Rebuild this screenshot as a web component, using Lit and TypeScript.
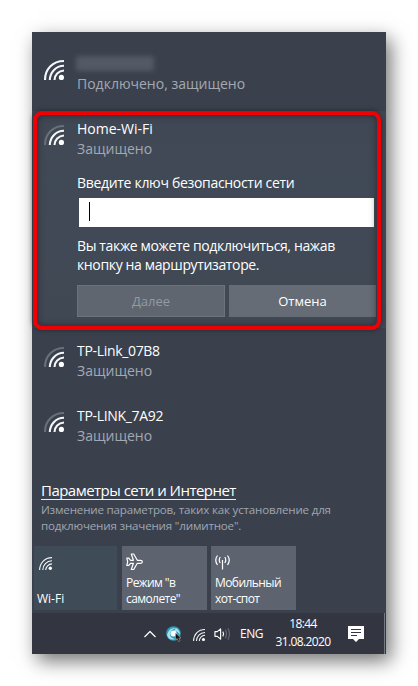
import { LitElement, html, css, svg } from "lit";
import { customElement, property } from "lit/decorators.js";

@customElement("wifi-icon")
class WifiIcon extends LitElement {
  @property({ type: Boolean }) weak = false;
  @property({ type: Boolean }) thin = false;
  static styles = css`
    :host { display: block; width: 20px; height: 20px; }
    svg { display: block; width: 100%; height: 100%; overflow: visible; }
    path { fill: none; stroke: #f4f6f9; stroke-width: 2.1; }
    .dim { stroke: #697079; }
    .thin { stroke-width: 1.7; }
    circle { fill: #fff; }
  `;
  render() {
    const t = this.thin ? "thin" : "";
    return html`<svg viewBox="0 0 20 20">
      ${svg`
      <path class="${t} ${this.weak ? "dim" : ""}" d="M1 20C1 9.5 8.500 1 20 1"/>
      <path class=${t} d="M5.800 20C6 12.500 11.500 6 20 5.800"/>
      <path class=${t} d="M10.500 20C10.500 15 14.500 10.800 20 10.500"/>
      <circle cx="17.400" cy="17.400" r="2.600"/>`}
    </svg>`;
  }
}

@customElement("network-row")
class NetworkRow extends LitElement {
  @property({ type: Boolean }) weak = false;
  @property({ type: Boolean }) masked = false;
  static styles = css`
    :host { display: flex; align-items: flex-start; height: 41px; }
    wifi-icon { margin: 6px 13px 0 12px; flex: none; }
    .text { display: flex; flex-direction: column; white-space: nowrap; }
    .name { height: 20px; line-height: 20px; color: #fff; }
    .status { height: 20px; line-height: 20px; color: #a3a9b3; }
    .mask { width: 78px; height: 15px; margin: 2px 0 3px -1px; background: #535a66; border-radius: 3px; filter: blur(2.5px); }
  `;
  render() {
    return html`<wifi-icon ?weak=${this.weak}></wifi-icon>
      <div class="text">
        ${this.masked ? html`<div class="mask"></div>` : html`<div class="name"><slot name="name"></slot></div>`}
        <div class="status"><slot name="status"></slot></div>
      </div>`;
  }
}

@customElement("app-root")
class AppRoot extends LitElement {
  static styles = css`
    :host {
      display: block; box-sizing: border-box; width: 418px; height: 686px; padding: 32px;
      background: #fff; overflow: hidden; font: 14px "Open Sans", "Noto Sans", sans-serif; color: #fff;
    }
    .panel {
      display: flex; flex-direction: column; width: 354px; height: 622px; position: relative;
      background: #3a414d; box-shadow: 5px 7px 18px rgba(0, 0, 0, .55);
    }
    span { white-space: nowrap; }
    .first { margin-top: 22px; }
    .open { margin-top: 16px; height: 217px; background: linear-gradient(#404754, #404a56 30%, #404854); padding-top: 8px; box-sizing: border-box; }
    .outline {
      position: absolute; left: 1px; top: 79px; width: 348px; height: 219px; box-sizing: border-box;
      border: 4px solid #ee0003; border-radius: 9px;
      box-shadow: 0 0 5px rgba(20, 20, 28, .65), inset 0 0 7px rgba(30, 20, 30, .65);
    }
    .form { margin-left: 45px; display: flex; flex-direction: column; align-items: flex-start; }
    .prompt { margin-top: 13px; height: 20px; line-height: 20px; letter-spacing: -.31px; }
    .field { margin: 5px 0 0 2px; width: 295px; height: 29px; background: #fff; display: flex; align-items: center; }
    .caret { width: 1px; height: 19px; margin-left: 10px; margin-top: -3px; background: #000; }
    .hint { height: 19px; line-height: 19px; letter-spacing: -.36px; }
    .hint.one { margin-top: 9px; }
    .buttons { display: flex; gap: 4px; margin-top: 11px; }
    .button {
      width: 148px; height: 32px; box-sizing: border-box; background: #656c76; display: flex; align-items: center;
      justify-content: center; font-size: 13px;
    }
    .button + .button { width: 147px; }
    .disabled { color: #939aa4; background: #5f6670; border: 1px solid #6d737c; }
    .next { margin-top: 13px; }
    .last { margin-top: 24px; }
    .tight { letter-spacing: -.32px; }
    .link { margin: 34px 0 1px 9px; height: 20px; line-height: 20px; font-size: 15px; letter-spacing: -.52px; display: flex; }
    .link span { height: 18px; border-bottom: 1px solid #e9edf2; line-height: 19px; }
    .note { margin-left: 9px; height: 16px; line-height: 16px; font-size: 11.6px; letter-spacing: -.19px; color: #a0a6b0; display: flex; }
    .tiles { display: flex; margin: 12px 0 0 2px; height: 64px; flex: none; }
    .tile {
      width: 85px; box-sizing: border-box; background: #5d646f; margin-right: 4px; padding: 7px 4px 3px;
      display: flex; flex-direction: column; align-items: flex-start; font-size: 12px; line-height: 16px; letter-spacing: -.58px;
    }
    .tile.on { width: 83px; background: #404b58; margin-right: 5px; padding-left: 3px; letter-spacing: 0; }
    .tile wifi-icon { width: 13px; height: 13px; margin: 4px 0 0 2px; }
    .tile svg { width: 18px; height: 18px; }
    .grow { flex: 1; }
    .bar { margin-top: auto; height: 41px; display: flex; align-items: center; background: #333640; font-size: 12px; }
    .bar svg { display: block; flex: none; }
    .chevron { margin-left: 111px; width: 14px; height: 8px; }
    .globe { margin-left: 9px; width: 16px; height: 16px; }
    .bar wifi-icon { width: 12px; height: 12px; margin: 3px 0 0 11px; }
    .speaker { margin-left: 9px; width: 17px; height: 14px; }
    .lang { margin-left: 9px; width: 24px; letter-spacing: -.5px; }
    .clock { margin: -2px 0 0 7px; width: 64px; display: flex; flex-direction: column; align-items: center; line-height: 18px; letter-spacing: -.6px; }
    .note-icon { margin-left: 13px; width: 16px; height: 17px; }
    .edge { margin-left: auto; width: 1px; height: 41px; margin-right: 1px; background: #747984; }
    .l { fill: none; stroke: #fff; stroke-width: 1.2; stroke-linejoin: round; }
    .f { stroke: #656b76; }
  `;
  render() {
    return html`<div class="panel">
      <network-row class="first" masked><span slot="status">Подключено, защищено</span></network-row>
      <div class="open">
        <network-row weak><span slot="name">Home-Wi-Fi</span><span slot="status">Защищено</span></network-row>
        <div class="form">
          <div class="prompt"><span>Введите ключ безопасности сети</span></div>
          <div class="field"><div class="caret"></div></div>
          <div class="hint one"><span>Вы также можете подключиться, нажав</span></div>
          <div class="hint"><span>кнопку на маршрутизаторе.</span></div>
          <div class="buttons">
            <div class="button disabled"><span>Далее</span></div>
            <div class="button"><span>Отмена</span></div>
          </div>
        </div>
      </div>
      <network-row class="next" weak><span class="tight" slot="name">TP-Link_07B8</span><span slot="status">Защищено</span></network-row>
      <network-row class="last" weak><span class="tight" slot="name">TP-LINK_7A92</span><span slot="status">Защищено</span></network-row>
      <div class="link"><span>Параметры сети и Интернет</span></div>
      <div class="note"><span>Изменение параметров, таких как установление для</span></div>
      <div class="note"><span>подключения значения "лимитное".</span></div>
      <div class="tiles">
        <div class="tile on"><wifi-icon thin></wifi-icon><div class="grow"></div><span>Wi-Fi</span></div>
        <div class="tile">
          <svg viewBox="0 0 18 18"><path class="l" d="M.8 5H2.600L4.600 7.300H7.400L5.300 1H7.700L11.300 7.300H14.500C17 7.300 17 10.300 14.500 10.300H11.300L7.700 16.500H5.300L7.400 10.300H4.600L2.600 12.500H.8L1.700 8.800Z"/></svg>
          <div class="grow"></div><span>Режим "в</span><span>самолете"</span>
        </div>
        <div class="tile">
          <svg viewBox="0 0 18 18"><path class="l" d="M7.500 7V16.500M5.200 4Q3.300 7 5.200 10M9.800 4Q11.700 7 9.800 10M2.500 2.500Q-1 7.200 2.500 12M12.500 2.500Q16 7.200 12.500 12"/></svg>
          <div class="grow"></div><span>Мобильный</span><span>хот-спот</span>
        </div>
      </div>
      <div class="bar">
        <svg class="chevron" viewBox="0 0 14 8"><path class="l" d="M1.500 7L7 1.500L12.500 7"/></svg>
        <svg class="globe" viewBox="0 0 16 16">
          <circle cx="7.500" cy="7.500" r="7.300" fill="#2c9bbd"/>
          <path d="M1 9Q3 1 10 2Q4 4 4 8Q4 12 9 13Q3 15 1 9M10 2Q14 4 14 9Q12 5 8 5Z" fill="#a5e0ee"/>
          <circle cx="7.500" cy="7.500" r="3" fill="#fff"/>
          <path d="M9.500 7V14L11.200 12.500L12.500 15.500L14 14.800L12.800 12H15Z" fill="#111" stroke="#c9b9ad" stroke-width=".5"/>
        </svg>
        <wifi-icon thin></wifi-icon>
        <svg class="speaker" viewBox="0 0 18 14">
          <path class="l" d="M1 4.500H3.500L7 1.500V12.500L3.500 9.500H1ZM9.300 4.500Q11 7 9.300 9.500"/>
          <path class="l f" d="M12 2.500Q14.500 7 12 11.500M14.700 1Q18 7 14.700 13"/>
        </svg>
        <span class="lang">ENG</span>
        <div class="clock"><span>18:44</span><span>31.08.2020</span></div>
        <svg class="note-icon" viewBox="0 0 16 17"><path d="M0 1H16V14H11L8 17L5 14H0Z" fill="#fff"/><path d="M3 4.500H13M3 7.500H13M3 10.500H9" stroke="#333640" stroke-width="1"/></svg>
        <div class="edge"></div>
      </div>
      <div class="outline"></div>
    </div>`;
  }
}
